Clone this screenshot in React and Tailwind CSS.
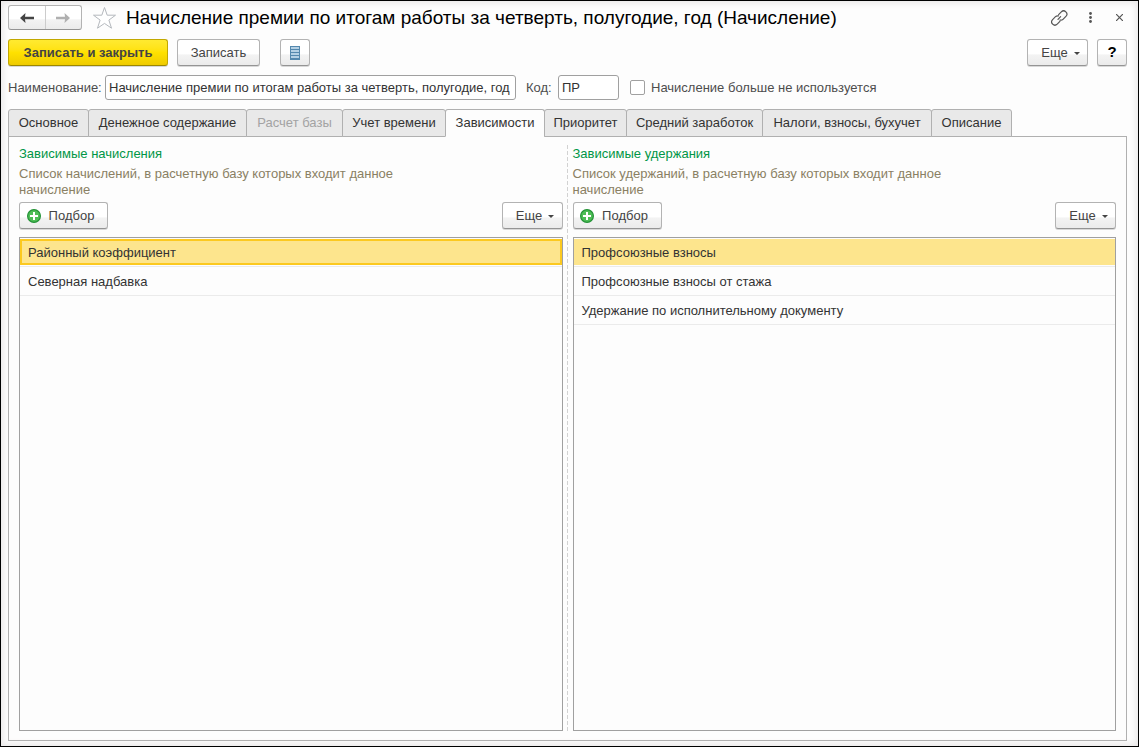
import React, { useState } from "react";
import clsx from "clsx";

const TABS = [
  { id: "main", label: "Основное", width: "w-[81px]" },
  { id: "money", label: "Денежное содержание", width: "w-[159px]" },
  { id: "base", label: "Расчет базы", width: "w-[97px]", disabled: true },
  { id: "time", label: "Учет времени", width: "w-[104px]" },
  { id: "deps", label: "Зависимости", width: "w-[100px]" },
  { id: "priority", label: "Приоритет", width: "w-[83px]" },
  { id: "average", label: "Средний заработок", width: "w-[137px]" },
  { id: "taxes", label: "Налоги, взносы, бухучет", width: "w-[170px]" },
  { id: "about", label: "Описание", width: "w-[81px]" },
];

const ACCRUALS = ["Районный коэффициент", "Северная надбавка"];
const DEDUCTIONS = [
  "Профсоюзные взносы",
  "Профсоюзные взносы от стажа",
  "Удержание по исполнительному документу",
];

function Button({ className, primary, children, ...props }) {
  return (
    <button
      type="button"
      className={clsx(
        "h-[27px] flex-shrink-0 flex items-center justify-center rounded-[3px] border bg-linear-to-b text-[#444444] whitespace-nowrap shadow-[0_1px_0_#d8d8d8]",
        primary
          ? "border-[#c2a800] border-b-[#9c8700] from-[#ffea30] via-[#ffe100] to-[#efcb00] font-bold"
          : "border-[#b3b3b3] border-b-[#949494] from-white from-55% via-[#f3f3f3] via-60% to-[#ebebeb]",
        className
      )}
      {...props}
    >
      {children}
    </button>
  );
}

function MoreButton() {
  return (
    <Button className="w-[61px] gap-[6px] pl-[6px]" aria-haspopup="menu">
      Еще
      <svg className="w-[6px] h-[3px] mt-[2px]" viewBox="0 0 6 3" fill="#444444">
        <path d="M0 0h6L3 3z" />
      </svg>
    </Button>
  );
}

function PlusIcon() {
  return (
    <svg className="w-[14px] h-[14px]" viewBox="0 0 14 14">
      <circle cx="7" cy="7" r="6.4" fill="#4dbd55" stroke="#259238" strokeWidth="1.2" />
      <path d="M7 3v8M3 7h8" stroke="#ffffff" strokeWidth="2" />
    </svg>
  );
}

function NavArrow({ color, flip }) {
  return (
    <svg className={clsx("w-[14px] h-[10px]", flip && "-scale-x-100")} viewBox="0 0 14 10">
      <path d="M0 5L5.5 0L5 3.8H14v2.4H5L5.5 10z" fill={color} />
    </svg>
  );
}

function DependencyPane({ title, hint, rows, focused }) {
  const [selected, setSelected] = useState(0);

  return (
    <section className="flex-1 min-w-0 flex flex-col">
      <h2 className="mt-px leading-4 text-[#009646]">{title}</h2>
      <p className="mt-1 max-w-[400px] leading-4 text-[#8a8063]">{hint}</p>
      <div className="flex justify-between mt-1 mb-2">
        <Button className="w-[89px] gap-2 pr-[6px]">
          <PlusIcon />
          Подбор
        </Button>
        <MoreButton />
      </div>
      <ul role="listbox" aria-label={title} className="flex-1 border border-[#a0a0a0]">
        {rows.map((row, i) => (
          <li
            key={row}
            role="option"
            aria-selected={i === selected}
            onClick={() => setSelected(i)}
            className="h-[29px] pt-px border-b border-[#ebebeb] cursor-default"
          >
            <div
              className={clsx(
                "h-[26px] flex items-center border-2 px-[6px] pt-[2px]",
                i !== selected && "border-transparent",
                i === selected && "bg-[#fde58d]",
                i === selected && (focused ? "border-[#fcc91f]" : "border-[#fde58d]")
              )}
            >
              {row}
            </div>
          </li>
        ))}
      </ul>
    </section>
  );
}

export default function App() {
  const [tab, setTab] = useState("deps");
  const [name, setName] = useState("Начисление премии по итогам работы за четверть, полугодие, год");
  const [code, setCode] = useState("ПР");
  const [unused, setUnused] = useState(false);

  return (
    <div className="min-h-screen flex flex-col border border-black bg-[#fdfdfd] pt-1 pl-[7px] pr-[11px] pb-[5px] font-['Liberation_Sans',Arial,sans-serif] text-[13px] text-[#333333] shadow-[inset_0_0_6px_2px_#e9e7e7]">
      {/* Title bar */}
      <header className="flex items-center h-[25px]">
        <div className="flex w-[74px] h-[25px] flex-shrink-0 rounded-[3px] border border-[#b3b3b3] border-b-[#949494] bg-linear-to-b from-white from-55% via-[#f3f3f3] via-60% to-[#ebebeb]">
          <button type="button" aria-label="Назад" className="flex-1 flex items-center justify-center border-r border-[#cccccc]">
            <NavArrow color="#444444" />
          </button>
          <button type="button" aria-label="Вперед" className="flex-1 flex items-center justify-center">
            <NavArrow color="#b0b0b0" flip />
          </button>
        </div>
        <button type="button" aria-label="В избранное" className="ml-[10px] mr-[9px] flex-shrink-0">
          <svg className="w-[25px] h-[24px]" viewBox="0 0 25 24" fill="#ffffff" stroke="#b4b8bd" strokeWidth="1">
            <path d="M12.5 1.5L15.2 9.2H23.5L16.9 14.1L19.5 22.2L12.5 17.4L5.5 22.2L8.1 14.1L1.5 9.2H9.8Z" />
          </svg>
        </button>
        <h1 className="flex-1 min-w-0 truncate text-[19px] leading-6 text-black">
          Начисление премии по итогам работы за четверть, полугодие, год (Начисление)
        </h1>
        <div className="flex items-center gap-[13px] text-[#555555]">
          <button type="button" aria-label="Ссылка">
            <svg className="w-[18px] h-4" viewBox="0 0 18 16" fill="none" stroke="currentColor" strokeWidth="1.2" strokeLinecap="round">
              <path d="M7.6 4.6L10.3 1.9a3.2 3.2 0 0 1 4.6 4.5L12 9.300a3.200 3.200 0 0 1-3 .8" />
              <path d="M8.900 11.400L6.200 14.100a3.200 3.200 0 0 1-4.600-4.500L4.500 6.700a3.200 3.200 0 0 1 3-.8" />
              <path d="M7 9.300L9.600 6.700" />
            </svg>
          </button>
          <button type="button" aria-label="Действия" className="w-4 flex justify-center">
            <svg className="w-[3px] h-[11px]" viewBox="0 0 3 11" fill="currentColor">
              <circle cx="1.5" cy="1.5" r="1.4" />
              <circle cx="1.5" cy="5.5" r="1.4" />
              <circle cx="1.5" cy="9.5" r="1.4" />
            </svg>
          </button>
          <button type="button" aria-label="Закрыть" className="w-4 flex justify-center">
            <svg className="w-[7px] h-[7px]" viewBox="0 0 7 7" stroke="currentColor" strokeWidth="1.2">
              <path d="M0 0l7 7M7 0L0 7" />
            </svg>
          </button>
        </div>
      </header>

      {/* Commands */}
      <div className="flex items-center mt-[9px]">
        <Button primary className="w-[160px]">Записать и закрыть</Button>
        <Button className="w-[83px] ml-[9px]">Записать</Button>
        <Button className="w-[30px] ml-5" aria-label="Список">
          <svg className="w-[10px] h-[14px]" viewBox="0 0 10 14">
            <path d="M0 0h10v14H0z" fill="#5488ae" />
            <path d="M1 1h8v2H1zM1 4h8v2H1zM1 7h8v2H1zM1 10h8v2H1z" fill="#b4d0e4" />
          </svg>
        </Button>
        <div className="flex gap-[9px] ml-auto">
          <MoreButton />
          <Button className="w-[30px] text-[15px] font-bold text-black">?</Button>
        </div>
      </div>

      {/* Fields */}
      <div className="flex items-center h-[25px] mt-[9px] text-[#4d4d4d]">
        <label htmlFor="name" className="w-[97px] flex-shrink-0">Наименование:</label>
        <input
          id="name"
          value={name}
          onChange={e => setName(e.target.value)}
          className="w-[411px] h-[25px] px-[3px] rounded-[3px] border border-[#a0a0a0] bg-white text-[#333333]"
        />
        <label htmlFor="code" className="ml-[10px] w-8 flex-shrink-0">Код:</label>
        <input
          id="code"
          value={code}
          onChange={e => setCode(e.target.value)}
          className="w-[61px] h-[25px] px-[3px] rounded-[3px] border border-[#a0a0a0] bg-white text-[#333333]"
        />
        <label className="flex items-center gap-[6px] ml-[11px] whitespace-nowrap">
          <input
            type="checkbox"
            checked={unused}
            onChange={e => setUnused(e.target.checked)}
            className="appearance-none w-[15px] h-[15px] rounded-[2px] border border-[#a0a0a0] bg-white checked:bg-[#555555]"
          />
          Начисление больше не используется
        </label>
      </div>

      {/* Tabs */}
      <div role="tablist" className="relative flex h-7 mt-[9px] -mb-px">
        {TABS.map(t => (
          <button
            key={t.id}
            type="button"
            role="tab"
            aria-selected={t.id === tab}
            disabled={t.disabled}
            onClick={() => setTab(t.id)}
            className={clsx(
              "-mr-px flex-shrink-0 flex items-center justify-center rounded-t-[3px] border border-[#b0b0b0] whitespace-nowrap",
              t.width,
              t.id === tab ? "bg-[#fdfdfd] border-b-[#fdfdfd]" : "bg-[#e9e9e9]",
              t.disabled && "text-[#a3a3a3]"
            )}
          >
            {t.label}
          </button>
        ))}
      </div>

      <main role="tabpanel" className="flex-1 flex border border-[#b0b0b0] pt-2 px-[10px] pb-[9px]">
        <DependencyPane
          title="Зависимые начисления"
          hint="Список начислений, в расчетную базу которых входит данное начисление"
          rows={ACCRUALS}
          focused
        />
        <div className="w-px ml-1 mr-[5px] bg-[repeating-linear-gradient(to_bottom,#d2d2d2_0_4px,transparent_4px_6px)]" />
        <DependencyPane
          title="Зависимые удержания"
          hint="Список удержаний, в расчетную базу которых входит данное начисление"
          rows={DEDUCTIONS}
        />
      </main>
    </div>
  );
}
